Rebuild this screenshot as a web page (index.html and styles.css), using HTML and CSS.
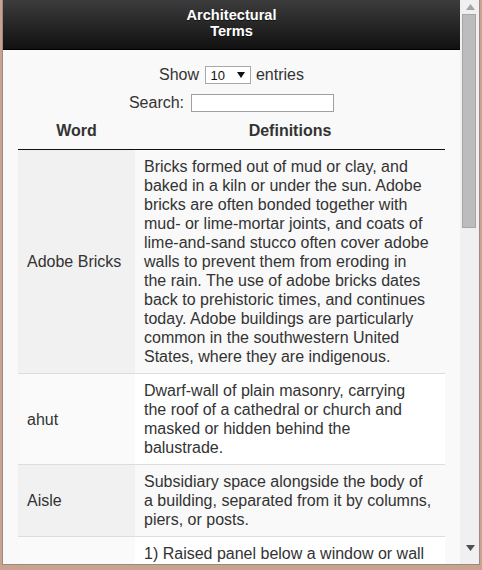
FILE: index.html
```html
<!DOCTYPE html>
<html>
<head>
<meta charset="utf-8">
<link rel="stylesheet" href="styles.css">
</head>
<body>
<div class="frame">
  <div class="window">
    <div class="main">
      <div class="header"><h1 class="title">Architectural Terms</h1></div>
      <div class="content">
        <div class="length">Show <span class="select"><span class="select-val">10</span><svg class="select-arrow" width="8" height="6" viewBox="0 0 8 6"><polygon points="0,0 8,0 4,6" fill="#111"/></svg></span> entries</div>
        <div class="search"><label class="search-label">Search:</label><span class="search-input"></span></div>
        <table class="terms">
          <colgroup><col class="col-word"><col class="col-def"></colgroup>
          <thead>
            <tr><th>Word</th><th>Definitions</th></tr>
          </thead>
          <tbody>
            <tr class="odd">
              <td class="word">Adobe Bricks</td>
              <td class="def">Bricks formed out of mud or clay, and baked in a kiln or under the sun. Adobe bricks are often bonded together with mud- or lime-mortar joints, and coats of lime-and-sand stucco often cover adobe walls to prevent them from eroding in the rain. The use of adobe bricks dates back to prehistoric times, and continues today. Adobe buildings are particularly common in the southwestern United States, where they are indigenous.</td>
            </tr>
            <tr class="even">
              <td class="word">ahut</td>
              <td class="def">Dwarf-wall of plain masonry, carrying the roof of a cathedral or church and masked or hidden behind the balustrade.</td>
            </tr>
            <tr class="odd">
              <td class="word">Aisle</td>
              <td class="def">Subsidiary space alongside the body of a building, separated from it by columns, piers, or posts.</td>
            </tr>
            <tr class="even">
              <td class="word">Apron</td>
              <td class="def">1) Raised panel below a window or wall monument or tablet. 2) Paved area at the end of a driveway or in front of a garage.</td>
            </tr>
          </tbody>
        </table>
      </div>
    </div>
    <div class="scrollbar">
      <div class="sb-up"><svg width="9" height="6" viewBox="0 0 9 6"><polygon points="4.5,0 9,6 0,6" fill="#a3a3a3"/></svg></div>
      <div class="sb-thumb"></div>
      <div class="sb-track"></div>
      <div class="sb-down"><svg width="9" height="6" viewBox="0 0 9 6"><polygon points="0,0 9,0 4.5,6" fill="#505050"/></svg></div>
    </div>
  </div>
</div>
</body>
</html>
```

FILE: styles.css
```css
html, body {
  margin: 0;
  padding: 0;
}
body {
  font-family: "Liberation Sans", Arial, sans-serif;
  color: #333;
}
.frame {
  width: 482px;
  height: 570px;
  box-sizing: border-box;
  background: #c9a290;
  padding: 0 4px 5px 2px;
  display: flex;
}
.window {
  flex: 1;
  display: flex;
  min-height: 0;
  border-left: 1px solid #9a8a82;
  border-right: 1px solid #9a8a82;
  border-bottom: 1px solid #9a8a82;
  background: #f9f9f9;
}
.main {
  flex: 1;
  min-width: 0;
  overflow: hidden;
  background: #f9f9f9;
}
.header {
  height: 50px;
  box-sizing: border-box;
  background: linear-gradient(#3c3c3c, #111111);
  border-bottom: 1px solid #000;
  padding-top: 7px;
}
.title {
  margin: 0 auto;
  width: 110px;
  text-align: center;
  color: #fff;
  font-size: 14.6px;
  line-height: 16px;
  font-weight: bold;
  text-shadow: 0 1px 0 #111;
}
.content {
  padding-top: 15px;
}
.length {
  height: 20px;
  display: flex;
  align-items: center;
  justify-content: center;
  font-size: 16px;
  white-space: pre;
}
.select {
  display: inline-flex;
  align-items: center;
  justify-content: space-between;
  box-sizing: border-box;
  width: 46px;
  height: 18px;
  border: 1px solid #a9a9a9;
  background: #fff;
  padding: 0 5px 0 5px;
  margin: 0 1px;
}
.select-val {
  font-size: 13px;
  color: #111;
}
.select-arrow {
  display: block;
}
.search {
  margin-top: 9px;
  height: 18px;
  display: flex;
  align-items: center;
  justify-content: center;
  gap: 7px;
  font-size: 16px;
}
.search-input {
  display: block;
  box-sizing: border-box;
  width: 143px;
  height: 18px;
  border: 1px solid #a0a0a0;
  background: #fff;
}
.terms {
  width: 427px;
  margin: 0 15px;
  border-collapse: separate;
  border-spacing: 0;
  table-layout: fixed;
  font-size: 16px;
  line-height: 19px;
}
.col-word {
  width: 117px;
}
.col-def {
  width: 310px;
}
.terms th {
  font-weight: bold;
  text-align: center;
  padding: 9px 10px;
  border-bottom: 1px solid #111;
}
.terms td {
  padding: 7px 9px;
  border-top: 1px solid #ddd;
  vertical-align: middle;
}
.terms td.def {
  padding-right: 13.5px;
}
.terms tbody tr:first-child td {
  border-top: none;
}
.odd .word {
  background: #f1f1f1;
}
.odd .def {
  background: #f9f9f9;
}
.even .word {
  background: #fafafa;
}
.even .def {
  background: #ffffff;
}
.scrollbar {
  width: 19px;
  flex: none;
  display: flex;
  flex-direction: column;
  background: #f0f0f0;
}
.sb-up {
  height: 14px;
  display: flex;
  align-items: center;
  justify-content: center;
  padding-left: 1px;
}
.sb-up svg, .sb-down svg {
  display: block;
}
.sb-thumb {
  height: 214px;
  margin: 0 3px 0 2px;
  box-sizing: border-box;
  background: #bcbcbc;
  border: 1px solid #a6a6a6;
}
.sb-track {
  flex: 1;
}
.sb-down {
  height: 26px;
  display: flex;
  align-items: flex-start;
  justify-content: center;
  padding-top: 7px;
  box-sizing: border-box;
  padding-left: 1px;
}
```
